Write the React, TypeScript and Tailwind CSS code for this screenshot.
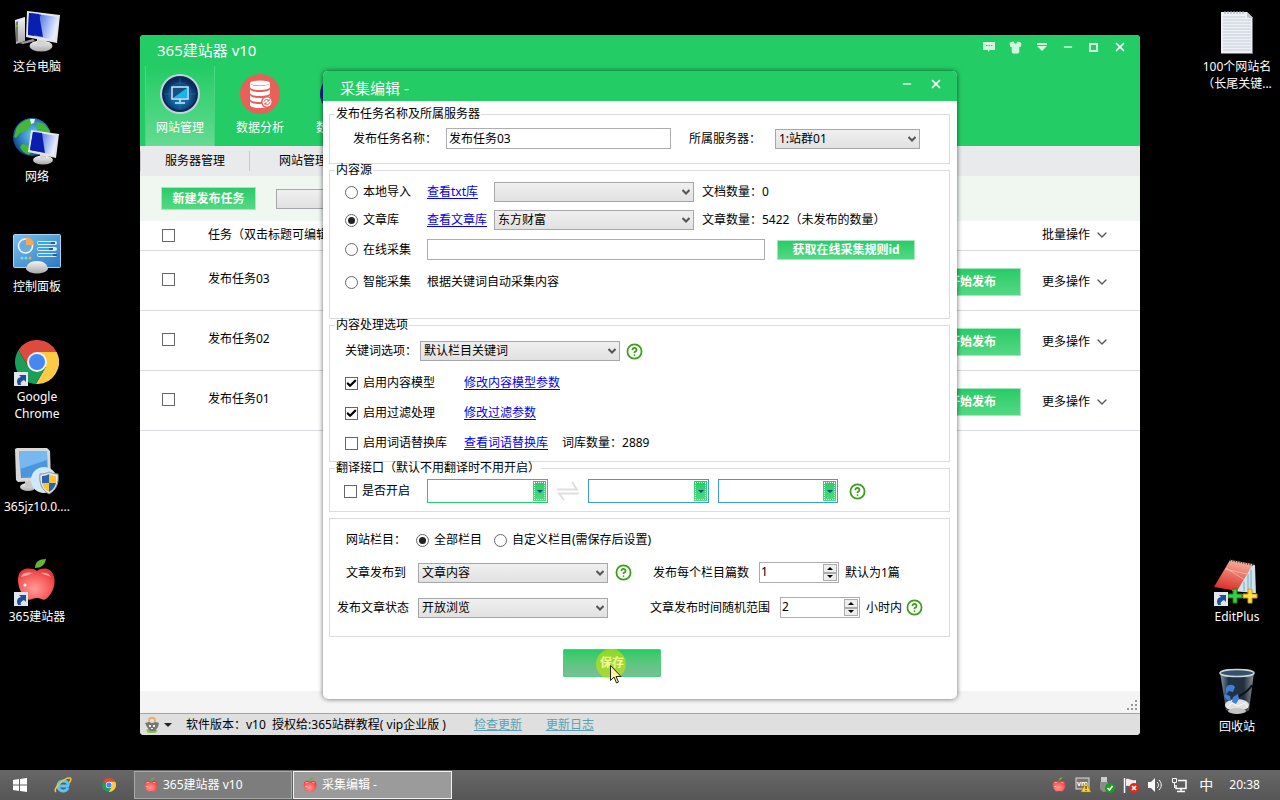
import type { ReactNode } from "react"
import { Check, ChevronDown, HelpCircle, Minus, Shirt, X } from "lucide-react"

const tasks = ["发布任务03", "发布任务02", "发布任务01"]

// ─── Desktop icons ──────────────────────────────────────────────────────────

function IconDefs() {
  return (
    <svg className="absolute h-0 w-0" aria-hidden="true">
      <defs>
        <linearGradient id="screen" x1="0" x2="1" y1="0" y2="0.3">
          <stop offset="0" stopColor="#0a1fc4" />
          <stop offset="0.4" stopColor="#0a2bd0" />
          <stop offset="0.42" stopColor="#5d7fe8" />
          <stop offset="1" stopColor="#e4edff" />
        </linearGradient>
        <linearGradient id="metal" x1="0" x2="0" y1="0" y2="1">
          <stop offset="0" stopColor="#f4f4f4" />
          <stop offset="1" stopColor="#a9a9a9" />
        </linearGradient>
        <radialGradient id="globe" cx="0.55" cy="0.45" r="0.6">
          <stop offset="0" stopColor="#6fd0f5" />
          <stop offset="0.6" stopColor="#2f7fc4" />
          <stop offset="1" stopColor="#123c86" />
        </radialGradient>
        <linearGradient id="panel" x1="0" x2="1" y1="0" y2="1">
          <stop offset="0" stopColor="#7cc0ea" />
          <stop offset="1" stopColor="#2b79c2" />
        </linearGradient>
        <radialGradient id="apple" cx="0.45" cy="0.65" r="0.65">
          <stop offset="0" stopColor="#ff9c98" />
          <stop offset="0.6" stopColor="#f8615f" />
          <stop offset="1" stopColor="#e8383a" />
        </radialGradient>
        <linearGradient id="pad" x1="0.6" x2="0.3" y1="0" y2="1">
          <stop offset="0" stopColor="#f7b09e" />
          <stop offset="1" stopColor="#d92a22" />
        </linearGradient>
        <linearGradient id="bin" x1="0" x2="1" y1="0" y2="0">
          <stop offset="0" stopColor="#8d99a5" />
          <stop offset="0.25" stopColor="#1f3347" />
          <stop offset="0.7" stopColor="#23303c" />
          <stop offset="1" stopColor="#8c949c" />
        </linearGradient>
        <radialGradient id="radar" cx="0.5" cy="0.6" r="0.6">
          <stop offset="0" stopColor="#1490d8" />
          <stop offset="1" stopColor="#0a2450" />
        </radialGradient>
      </defs>
    </svg>
  )
}

function Shortcut() {
  return (
    <g>
      <rect x="1" y="34" width="14" height="14" fill="#dfe6ee" />
      <path d="M5 47c-2-4-1-7 3-8l-2-2h7v7l-2-2c-3 1-4 3-3 5z" fill="#1f4f9a" />
    </g>
  )
}

function ComputerIcon() {
  return (
    <svg viewBox="0 0 48 48" className="size-12">
      <path d="M2 12l10-3v24L3 36z" fill="url(#metal)" />
      <path d="M3 14l2-1v20l-2 1z" fill="#777" />
      <circle cx="4" cy="18" r="1" fill="#5d0" />
      <path d="M6 35l14-4 2 2-12 3z" fill="#999" />
      <ellipse cx="28" cy="38" rx="11.500" ry="5.500" fill="url(#metal)" />
      <path d="M24 31h9v7h-9z" fill="#d5d5d5" />
      <path d="M14 3l33 4-3 28-31-6z" fill="#e6e6e6" />
      <path d="M16 5l29 4-3 23-27-5z" fill="url(#screen)" />
      <path d="M16 5l10 1 4 23-15-3z" fill="#0a1fb0" />
    </svg>
  )
}

function NetworkIcon() {
  return (
    <svg viewBox="0 0 48 48" className="size-12">
      <circle cx="19" cy="19" r="19" fill="url(#globe)" />
      <path d="M3 11c4-7 10-10 16-10l3 3-5 4-3 5-7 2-4 5-2-1zM24 4l7 2 6 7-2 3-6-2-6-4zM9 26l6 1 4 6-3 4c-5-2-8-5-9-8z" fill="#45b636" />
      <path d="M17 1l5 0-1 4-3 1z" fill="#e6f6ff" />
      <ellipse cx="30" cy="42" rx="10" ry="4.500" fill="url(#metal)" />
      <path d="M27 36h6v6h-6z" fill="#d5d5d5" />
      <path d="M18 12l28 4-3 24-28-6z" fill="#e4e4e4" />
      <path d="M20 14l24 4-3 19-24-5z" fill="url(#screen)" />
      <path d="M20 14l9 1 3 20-15-3z" fill="#0a1fb0" />
    </svg>
  )
}

function ControlPanelIcon() {
  return (
    <svg viewBox="0 0 48 48" className="size-12">
      <rect x="0.500" y="6.500" width="47" height="33" rx="1" fill="url(#panel)" stroke="#a9d5f3" />
      <circle cx="12.500" cy="18" r="7" fill="#69acdf" stroke="#f2f8fd" strokeWidth="1.500" />
      <path d="M13 17V9a8 8 0 0 1 8 8z" fill="#f6a85a" />
      <circle cx="9" cy="30" r="1.500" fill="#67e3f7" />
      <circle cx="13" cy="30" r="1.500" fill="#67e3f7" />
      <circle cx="17" cy="30" r="1.500" fill="#f8a93c" />
      {[13, 19, 25].map((y, i) => (
        <g key={y}>
          <rect x="24" y={y} width="20" height="4" rx="2" fill="#d9eefb" />
          <rect x="25" y={y + 1} width={[13, 11, 15][i]} height="2" fill="#37a4e8" />
          <rect x={[38, 36, 40][i]} y={y + 1} width="4" height="2" fill="#1b5fa8" />
        </g>
      ))}
      <path d="M13 41c1-5 4-8 11-8s10 3 11 8c-3 6-19 6-22 0z" fill="url(#metal)" />
    </svg>
  )
}

function ChromeMark({ className }: { className: string }) {
  return (
    <svg viewBox="-22 -22 44 44" className={className}>
      <path d="M0-10H19.600A22 22 0 0 0-18.460-11.970L-8.660 5Z" fill="#dd4b3e" />
      <path d="M0-10H19.600A22 22 0 0 1-1.140 21.970L8.660 5Z" fill="#fdcb43" />
      <path d="M-8.660 5L-18.460-11.970A22 22 0 0 0-1.140 21.970L8.660 5Z" fill="#1a9e5a" />
      <circle r="10" fill="#f3f3f3" />
      <circle r="8" fill="#4587f3" />
    </svg>
  )
}

function ChromeIcon() {
  return (
    <span className="relative flex size-12 items-center justify-center">
      <ChromeMark className="size-11" />
      <svg viewBox="0 0 48 48" className="absolute inset-0 size-12">
        <Shortcut />
      </svg>
    </span>
  )
}

function SetupIcon() {
  return (
    <svg viewBox="0 0 48 48" className="size-12">
      <ellipse cx="15" cy="39" rx="8" ry="4" fill="url(#metal)" />
      <path d="M12 31h8v8h-8z" fill="#c9c9c9" />
      <path d="M2 1l2-1h30l3 3 1 29-33 2-2-2z" fill="#d8d8d8" />
      <path d="M6 3h28l1 26-27 1z" fill="#4a97df" />
      <path d="M6 3h28v9L7 21z" fill="#77b8ee" />
      <circle cx="31" cy="32" r="13" fill="#cfe8fa" />
      <path d="M27 26c4 0 7-1 9-2 2 1 5 2 9 2 1 10-2 16-9 20-7-4-10-10-9-20z" fill="#e8e8e8" stroke="#909090" />
      <path d="M29 28c3 0 5-1 7-2v9h-7zM36 35h7c-1 4-3 7-7 9z" fill="#2b62b5" />
      <path d="M36 26c2 1 4 2 7 2v7h-7zM29 35h7v9c-4-2-6-5-7-9z" fill="#f5c92e" />
    </svg>
  )
}

function AppleShape() {
  return (
    <g>
      <path d="M24 13c5-4 13-3 16 3 4 8 0 20-7 25-3 2-5-1-9-1s-7 3-10 1C7 36 3 24 6 16c3-6 12-7 18-3z" fill="url(#apple)" />
      <path d="M8 19c2-5 7-5 12-4-4 2-8 3-12 4zM28 15c4-1 8 0 10 4-4-2-7-2-10-4z" fill="#ffd0cd" opacity="0.700" />
      <circle cx="12" cy="27" r="1.500" fill="#fff" />
      <path d="M22 10c0-6 4-9 11-9-1 6-5 9-11 9z" fill="#63b62f" />
    </g>
  )
}

function AppleIcon() {
  return (
    <svg viewBox="0 0 48 48" className="size-12">
      <AppleShape />
      <Shortcut />
    </svg>
  )
}

function SmallApple() {
  return (
    <svg viewBox="0 0 46 46" className="size-4 shrink-0">
      <AppleShape />
    </svg>
  )
}

function NotepadIcon() {
  return (
    <svg viewBox="0 0 48 48" className="size-12">
      <path d="M8 4h26l6 6v36H8z" fill="#eef1f6" />
      <path d="M34 4v6h6z" fill="#c4cad3" />
      {[9, 12, 15, 18, 21, 24, 27, 30, 33, 36, 39, 42].map((y) => (
        <path key={y} d={`M10 ${y}h${y < 12 ? 22 : 28}`} stroke="#c3ccd8" />
      ))}
      <path d="M12 3v3M15 3v3M18 3v3M21 3v3M24 3v3M27 3v3M30 3v3" stroke="#9aa3ad" />
      <path d="M8 45.500h32M39.500 10v36" stroke="#70767e" />
    </svg>
  )
}

function EditPlusIcon() {
  return (
    <svg viewBox="0 0 48 48" className="size-12">
      <path d="M17 2l25 5 1 28-24-2z" fill="#d9c9a8" />
      <path d="M39 8l3 0v27l-18-2z" fill="#cfe3ee" />
      <path d="M38 12v18M35 16v16M31 24v9" stroke="#7aa5bd" />
      <path d="M17 2l23 4-16 27-23-4z" fill="url(#pad)" />
      <path d="M13 10l19 12M12 11l22 5" stroke="#fbd3c8" opacity="0.600" />
      <path d="M17 2l24 5" stroke="#333" strokeWidth="2" strokeDasharray="1 1.500" />
      <path d="M20 31h4v5h5v4h-5v5h-4v-5h-5v-4h5z" fill="#3ecb45" stroke="#14831c" />
      <path d="M35 31h4v5h5v4h-5v5h-4v-5h-5v-4h5z" fill="#ffe04a" stroke="#d29a08" />
      <Shortcut />
    </svg>
  )
}

function RecycleBinIcon() {
  return (
    <svg viewBox="0 0 48 48" className="size-12">
      <path d="M7 4h34l-5 38c-3 4-20 4-23 0z" fill="url(#bin)" />
      <ellipse cx="24" cy="5" rx="17" ry="3.500" fill="#35516b" stroke="#cfd6dc" strokeWidth="1.500" />
      <path d="M39 17c-4 7-8 8-14 12" fill="none" stroke="#0c1218" strokeWidth="2" />
      <ellipse cx="24" cy="37" rx="12" ry="6" fill="#e0e0e0" />
      <ellipse cx="24" cy="43" rx="9" ry="3" fill="#c3c3c3" />
      <path d="M13 20c2-4 7-4 9-1l-2 5-4-1-3 3zM12 26l5 2 1 5-4-1c-2-2-3-4-2-6zM20 29l5-3 1 5-3 5-4-2z" fill="#3f7fd6" />
      <path d="M14 40l5-5 6 3 7-3 3 5" fill="none" stroke="#f7f7f7" />
    </svg>
  )
}

function DesktopItem({ icon, label }: { icon: ReactNode; label: string }) {
  return (
    <button type="button" className="flex h-[110px] w-[74px] flex-col items-center gap-0.5 pt-2 text-xs leading-[17px] text-white">
      {icon}
      <span className="whitespace-pre-line">{label}</span>
    </button>
  )
}

// ─── Form parts ─────────────────────────────────────────────────────────────

function Tick({ id, label, type, name, checked = false, hideLabel = false }: {
  id: string
  label: string
  type: "checkbox" | "radio"
  name?: string
  checked?: boolean
  hideLabel?: boolean
}) {
  const round = type === "radio"
  return (
    <label htmlFor={id} className="flex items-center gap-[5px] whitespace-nowrap">
      <span className="relative flex size-[13px] shrink-0 items-center justify-center">
        <input
          id={id}
          type={type}
          name={name}
          defaultChecked={checked}
          aria-label={hideLabel ? label : undefined}
          className={
            round
              ? "peer size-[13px] appearance-none rounded-full border border-[#666] bg-white"
              : "peer size-[13px] appearance-none border border-[#666] bg-white"
          }
        />
        {round ? (
          <span className="pointer-events-none absolute hidden size-[7px] rounded-full bg-[#222] peer-checked:block" />
        ) : (
          <Check className="pointer-events-none absolute hidden size-[11px] text-black peer-checked:block" strokeWidth={5} />
        )}
      </span>
      {!hideLabel && label}
    </label>
  )
}

function Select({ id, value = "", width, label }: { id: string; value?: string; width: string; label?: string }) {
  return (
    <span className={`relative flex shrink-0 items-center ${width}`}>
      <select
        id={id}
        aria-label={label}
        className="h-5 w-full appearance-none border border-[#a7a7ab] bg-linear-to-b from-[#f0f0f0] to-[#e1e1e1] pr-5 pl-[3px] leading-[18px] text-black"
      >
        <option>{value}</option>
      </select>
      <svg viewBox="0 0 8 6" className="pointer-events-none absolute right-1 h-1.5 w-2">
        <path d="M0.500 1L4 4.500 7.500 1" fill="none" stroke="#555" strokeWidth="2" />
      </svg>
    </span>
  )
}

function LangSelect({ label, width, border }: { label: string; width: string; border: string }) {
  return (
    <span className={`relative flex shrink-0 items-center ${width}`}>
      <select aria-label={label} className={`h-6 w-full appearance-none border bg-white ${border}`}>
        <option />
      </select>
      <span className="pointer-events-none absolute right-[2px] flex h-5 w-[13px] bg-linear-to-b from-[#22cc64] to-[#4fdb80] p-px">
        <span className="flex flex-1 items-center justify-center border border-dotted border-white">
          <svg viewBox="0 0 6 3" className="h-[3px] w-1.5">
            <path d="M0 0h6L3 3z" fill="#0b4a8c" />
          </svg>
        </span>
      </span>
    </span>
  )
}

function Spinner({ id, value }: { id: string; value: string }) {
  return (
    <span className="flex h-[21px] w-20 shrink-0 border border-[#abadb3] bg-white p-px">
      <input id={id} inputMode="numeric" defaultValue={value} className="w-full min-w-0 self-start leading-4 outline-none" />
      <span className="flex w-3.5 shrink-0 flex-col">
        {["增加", "减少"].map((name, i) => (
          <button key={name} type="button" aria-label={name} className="flex flex-1 items-center justify-center border border-[#acacac] bg-[#eee]">
            <svg viewBox="0 0 6 3" className={i === 0 ? "h-[3px] w-1.5" : "h-[3px] w-1.5 rotate-180"}>
              <path d="M0 3h6L3 0z" fill="#000" />
            </svg>
          </button>
        ))}
      </span>
    </span>
  )
}

function Help() {
  return (
    <button type="button" aria-label="帮助" className="shrink-0 text-[#3a9f16]">
      <HelpCircle className="size-[17px]" strokeWidth={2.5} />
    </button>
  )
}

function TextLink({ children }: { children: ReactNode }) {
  return (
    <a href="#" className="whitespace-nowrap text-[#0000ee] underline underline-offset-2">
      {children}
    </a>
  )
}

function Group({ title, className, children }: { title: string; className: string; children: ReactNode }) {
  return (
    <fieldset className="min-w-0 border border-[#dcdcdc]">
      <legend className="ml-[5px] h-3 px-px leading-3">{title}</legend>
      <div className={className}>{children}</div>
    </fieldset>
  )
}

// ─── Main window ────────────────────────────────────────────────────────────

function DatabaseIcon() {
  return (
    <svg viewBox="0 0 40 40" className="size-10">
      <circle cx="20" cy="20" r="20" fill="#e9605a" />
      {[12, 18, 24, 30].map((y) => (
        <path key={y} d={`M10 ${y - 3}c0 4 20 4 20 0v4c0 4-20 4-20 0z`} fill="#fff" />
      ))}
      <ellipse cx="20" cy="9" rx="10" ry="2.500" fill="#fff" />
      <circle cx="27" cy="28" r="6" fill="#e9605a" />
      <circle cx="27" cy="28" r="4.500" fill="#fff" />
      <path d="M24 28c0-3 5-3 5-1M30 28c0 3-5 3-5 1M29 25v2h-2M25 31v-2h2" fill="none" stroke="#e9605a" />
    </svg>
  )
}

function SiteIcon() {
  return (
    <svg viewBox="0 0 40 40" className="size-10">
      <circle cx="20" cy="20" r="20" fill="#c3d3df" />
      <circle cx="20" cy="20" r="18" fill="#0d2a55" />
      <circle cx="20" cy="20" r="16" fill="url(#radar)" />
      <path d="M4 20h32M20 4v32" stroke="#2b6fa8" opacity="0.600" />
      <circle cx="20" cy="20" r="11" fill="none" stroke="#2b6fa8" opacity="0.600" />
      <rect x="12" y="13" width="16" height="12" fill="#15507f" stroke="#cbeaff" strokeWidth="1.500" />
      <path d="M13 24l14-10v10z" fill="#18b5e8" />
      <path d="M20 25v3M15 29h10" stroke="#cbeaff" strokeWidth="1.500" />
    </svg>
  )
}

function CollectIcon() {
  return (
    <svg viewBox="0 0 40 40" className="size-10">
      <circle cx="20" cy="20" r="20" fill="#14208f" />
      <path d="M12 20h16M22 14l6 6-6 6" fill="none" stroke="#fff" strokeWidth="2" />
    </svg>
  )
}

function MainWindow() {
  return (
    <section className="absolute inset-[35px_140px] flex flex-col overflow-hidden rounded-[4px] bg-white text-xs text-black">
      <header className="bg-[#23cc64] text-white">
        <div className="flex h-[31px] justify-between pr-[13px] pl-[17px]">
          <h1 className="text-[15px] leading-[31px]">365建站器 v10</h1>
          <div className="flex h-6 items-center gap-3.5 text-[#d3f5e0]">
            <button type="button" aria-label="消息">
              <svg viewBox="0 0 12 12" className="size-3">
                <path d="M0 1h12v8H7l-2 2V9H0z" fill="currentColor" />
                <path d="M3 4.500h1.500M5.500 4.500H7M8 4.500h1.500" stroke="#23cc64" />
              </svg>
            </button>
            <button type="button" aria-label="皮肤">
              <Shirt className="size-[13px] fill-current" />
            </button>
            <button type="button" aria-label="菜单">
              <svg viewBox="0 0 12 12" className="size-3">
                <path d="M1 2h10v2H1zM1 5h10L6 10z" fill="currentColor" />
              </svg>
            </button>
            <button type="button" aria-label="最小化">
              <Minus className="size-3" strokeWidth={3} />
            </button>
            <button type="button" aria-label="最大化">
              <svg viewBox="0 0 11 11" className="size-[11px]">
                <path d="M2 2h7v7H2z" fill="none" stroke="currentColor" strokeWidth="2" />
              </svg>
            </button>
            <button type="button" aria-label="关闭" className="text-white">
              <X className="size-[14px]" strokeWidth={3} />
            </button>
          </div>
        </div>
        <nav className="flex gap-2.5 pl-[5px] text-center">
          <button type="button" className="flex h-20 w-[70px] flex-col items-center gap-1.5 border-x border-[#4bd582] bg-linear-to-b from-transparent to-white/30 pt-2">
            <SiteIcon />
            网站管理
          </button>
          <button type="button" className="flex h-20 w-[70px] flex-col items-center gap-1.5 pt-2">
            <DatabaseIcon />
            数据分析
          </button>
          <button type="button" className="flex h-20 w-[70px] flex-col items-center gap-1.5 pt-2">
            <CollectIcon />
            数据采集
          </button>
        </nav>
      </header>

      <nav className="flex h-[30px] shrink-0 items-center bg-[#e9eaec]">
        <button type="button" className="h-5 w-[110px] border-r border-l border-r-[#c9cacd] border-l-[#c9cacd]">服务器管理</button>
        <button type="button" className="h-5 w-[106px]">网站管理</button>
      </nav>

      <div className="flex h-[45px] shrink-0 items-center gap-5 bg-[#f0f7f1] pl-[21px]">
        <button type="button" className="h-[23px] w-[95px] border border-[#a5e8bf] bg-linear-to-b from-[#28cb68] to-[#52d983] font-bold text-white">
          新建发布任务
        </button>
        <Select id="task-filter" label="任务筛选" width="w-[200px]" />
      </div>

      <table className="w-full table-fixed border-collapse text-left">
        <thead>
          <tr className="h-[29px] border-b border-[#d8dbde]">
            <th className="w-[68px] pl-[22px] font-normal">
              <Tick id="task-all" type="checkbox" label="全选" hideLabel />
            </th>
            <th className="font-normal">任务（双击标题可编辑）</th>
            <th className="w-[119px]" />
            <th className="w-[98px] font-normal">
              <button type="button" className="flex items-center gap-1">
                批量操作
                <ChevronDown className="size-4 text-[#555]" strokeWidth={2} />
              </button>
            </th>
          </tr>
        </thead>
        <tbody>
          {tasks.map((task) => (
            <tr key={task} className="h-[60px] border-b border-[#d8dbde]">
              <td className="pb-0.5 pl-[22px]">
                <Tick id={task} type="checkbox" label={task} hideLabel />
              </td>
              <td className="pb-0.5">{task}</td>
              <td className="pt-1">
                <button type="button" className="h-7 w-[98px] border border-[#a5e8bf] bg-linear-to-b from-[#28cb68] to-[#52d983] font-bold text-white">
                  开始发布
                </button>
              </td>
              <td className="pt-1">
                <button type="button" className="flex items-center gap-1">
                  更多操作
                  <ChevronDown className="size-4 text-[#555]" strokeWidth={2} />
                </button>
              </td>
            </tr>
          ))}
        </tbody>
      </table>

      <div className="mt-auto flex h-[22px] items-end justify-end bg-[#f4f4f4] p-[3px]">
        <svg viewBox="0 0 10 10" className="size-2.5">
          <path d="M8 0h2v2H8zM4 4h2v2H4zM8 4h2v2H8zM0 8h2v2H0zM4 8h2v2H4zM8 8h2v2H8z" fill="#999" />
        </svg>
      </div>
      <footer className="flex h-[22px] shrink-0 items-center border-t border-[#7faec6] bg-[#dfdfdf] pl-1">
        <button type="button" aria-label="账户" className="flex w-[42px] items-center gap-1">
          <svg viewBox="0 0 16 16" className="size-4">
            <path d="M2 13c3-2 9-1 12 1l-3 2H4z" fill="#8fc04a" />
            <path d="M5 6V3c0-3 6-3 6 0v3" fill="none" stroke="#f0a63c" strokeWidth="1.500" />
            <path d="M1 6l4-1 3 1 4-1 3 1-1 4-3 4H6L3 10z" fill="#777" />
            <path d="M5 8h2v2H5zM9 8h2v2H9zM7 11h2v1H7z" fill="#eee" />
          </svg>
          <svg viewBox="0 0 8 4" className="h-1 w-2">
            <path d="M0 0h8L4 4z" fill="#222" />
          </svg>
        </button>
        <span className="whitespace-pre">软件版本：v10  授权给:365站群教程( vip企业版 )</span>
        <a href="#" className="ml-7 text-[#5a9fb3] underline">检查更新</a>
        <a href="#" className="ml-6 text-[#5a9fb3] underline">更新日志</a>
      </footer>
    </section>
  )
}

// ─── Edit dialog ────────────────────────────────────────────────────────────

function EditDialog() {
  return (
    <section
      role="dialog"
      aria-labelledby="edit-title"
      className="absolute top-[71px] left-1/2 w-[634px] -translate-x-1/2 overflow-hidden rounded-[5px] bg-white pb-[22px] text-xs leading-4 text-black shadow-[0_0_5px_rgba(0,0,0,0.6)]"
    >
      <header className="flex h-[30px] justify-between bg-[#23cc64] pr-3.5 pl-[17px] text-white">
        <h2 id="edit-title" className="text-[15px] leading-[34px]">采集编辑 -</h2>
        <div className="flex h-[26px] items-center gap-4">
          <button type="button" aria-label="最小化" className="text-[#d3f5e0]">
            <Minus className="size-3" strokeWidth={3} />
          </button>
          <button type="button" aria-label="关闭">
            <X className="size-[14px]" strokeWidth={3} />
          </button>
        </div>
      </header>

      <form className="pt-[7px] pr-[7px] pl-1.5">
        <Group title="发布任务名称及所属服务器" className="pt-2 pb-3.5 pl-[23px]">
          <div className="flex h-[21px] items-center">
            <label htmlFor="task-name" className="w-[93px]">发布任务名称：</label>
            <input id="task-name" defaultValue="发布任务03" className="h-[21px] w-[225px] border border-[#abadb3] px-0.5 pb-0.5" />
            <label htmlFor="server" className="ml-[18px] w-[86px]">所属服务器：</label>
            <Select id="server" value="1:站群01" width="w-[145px]" />
          </div>
        </Group>

        <Group title="内容源" className="pt-1.5 pb-[26px] pl-[15px]">
          <div className="flex h-5 items-center">
            <div className="w-[82px]"><Tick id="src-local" type="radio" name="source" label="本地导入" /></div>
            <div className="w-[67px]"><TextLink>查看txt库</TextLink></div>
            <Select id="txt-store" label="txt库" width="w-[200px]" />
            <span className="ml-2">文档数量：0</span>
          </div>
          <div className="mt-2 flex h-5 items-center">
            <div className="w-[82px]"><Tick id="src-store" type="radio" name="source" label="文章库" checked /></div>
            <div className="w-[67px]"><TextLink>查看文章库</TextLink></div>
            <Select id="article-store" label="文章库" value="东方财富" width="w-[200px]" />
            <span className="ml-2">文章数量：5422（未发布的数量）</span>
          </div>
          <div className="mt-[9px] flex h-[21px] items-center">
            <div className="w-[82px]"><Tick id="src-online" type="radio" name="source" label="在线采集" /></div>
            <input aria-label="在线采集规则" className="h-[21px] w-[338px] border border-[#abadb3] px-0.5" />
            <button type="button" className="ml-3 h-5 w-[138px] border border-[#a5e8bf] bg-linear-to-b from-[#28cb68] to-[#52d983] leading-4 font-bold text-white">
              获取在线采集规则id
            </button>
          </div>
          <div className="mt-3 flex h-5 items-center">
            <div className="w-[82px]"><Tick id="src-smart" type="radio" name="source" label="智能采集" /></div>
            <span>根据关键词自动采集内容</span>
          </div>
        </Group>

        <Group title="内容处理选项" className="pt-2.5 pb-2 pl-[15px]">
          <div className="flex h-5 items-center">
            <label htmlFor="keyword" className="w-[75px]">关键词选项：</label>
            <Select id="keyword" value="默认栏目关键词" width="w-[200px]" />
            <span className="ml-1.5 flex"><Help /></span>
          </div>
          <div className="mt-3 flex h-5 items-center">
            <div className="w-[119px]"><Tick id="use-model" type="checkbox" label="启用内容模型" checked /></div>
            <TextLink>修改内容模型参数</TextLink>
          </div>
          <div className="mt-2.5 flex h-5 items-center">
            <div className="w-[119px]"><Tick id="use-filter" type="checkbox" label="启用过滤处理" checked /></div>
            <TextLink>修改过滤参数</TextLink>
          </div>
          <div className="mt-2.5 flex h-5 items-center">
            <div className="w-[119px]"><Tick id="use-replace" type="checkbox" label="启用词语替换库" /></div>
            <TextLink>查看词语替换库</TextLink>
            <span className="ml-3.5">词库数量：2889</span>
          </div>
        </Group>

        <Group title="翻译接口（默认不用翻译时不用开启）" className="pt-[5px] pb-2 pl-3.5">
          <div className="flex h-6 items-center">
            <div className="w-[83px]"><Tick id="use-translate" type="checkbox" label="是否开启" /></div>
            <LangSelect label="源语言" width="w-[121px]" border="border-[#23cc64]" />
            <svg viewBox="0 0 22 20" className="mx-[9px] h-5 w-[22px] shrink-0">
              <path d="M0 8.500h20L15 1M22 12.500H2L7 19" fill="none" stroke="#dedede" strokeWidth="2" />
            </svg>
            <LangSelect label="目标语言" width="w-[121px]" border="border-[#3b9be0]" />
            <span className="w-[9px]" />
            <LangSelect label="翻译接口" width="w-[120px]" border="border-[#3b9be0]" />
            <span className="ml-[11px] flex"><Help /></span>
          </div>
        </Group>

        <fieldset className="mt-1.5 min-w-0 border border-[#dcdcdc] pt-[11px] pb-[18px]">
          <div className="flex h-5 items-center pl-4">
            <span className="w-[70px]">网站栏目：</span>
            <Tick id="col-all" type="radio" name="column" label="全部栏目" checked />
            <span className="ml-3 flex"><Tick id="col-custom" type="radio" name="column" label="自定义栏目(需保存后设置)" /></span>
          </div>
          <div className="mt-3 flex h-[21px] items-center pl-4">
            <label htmlFor="publish-to" className="w-[72px]">文章发布到</label>
            <Select id="publish-to" value="文章内容" width="w-[190px]" />
            <span className="ml-[7px] flex"><Help /></span>
            <label htmlFor="per-column" className="ml-[21px] w-[106px]">发布每个栏目篇数</label>
            <Spinner id="per-column" value="1" />
            <span className="ml-1.5">默认为1篇</span>
          </div>
          <div className="mt-3.5 flex h-[21px] items-center pl-[7px]">
            <label htmlFor="status" className="w-[81px]">发布文章状态</label>
            <Select id="status" value="开放浏览" width="w-[190px]" />
            <label htmlFor="time-range" className="ml-[42px] w-[130px]">文章发布时间随机范围</label>
            <Spinner id="time-range" value="2" />
            <span className="ml-1.5">小时内</span>
            <span className="ml-1 flex"><Help /></span>
          </div>
        </fieldset>

        <div className="mt-3 flex pl-[234px]">
          <button type="submit" className="relative h-7 w-[98px] rounded-[1px] border border-[#4bcf7e] bg-linear-to-b from-[#23cc64] to-[#7abf95] font-bold text-[#f3fb8c]">
            <span className="absolute -top-px left-8 size-[30px] rounded-full bg-[#c8e600]/60" />
            <span className="relative">保存</span>
            <svg viewBox="0 0 12 19" className="absolute top-[15px] left-[46px] z-10 h-[19px] w-3">
              <path d="M0.500 0.500v15l3.500-3.500 2.500 6 2-1-2.500-5.500h5z" fill="#fbf49a" stroke="#222" />
            </svg>
          </button>
        </div>
      </form>
    </section>
  )
}

// ─── Taskbar ────────────────────────────────────────────────────────────────

function Taskbar() {
  return (
    <footer className="flex h-[30px] shrink-0 items-center bg-linear-to-b from-[#676767] to-[#565656] text-xs text-white">
      <button type="button" aria-label="开始" className="flex w-[39px] justify-center">
        <svg viewBox="0 0 14 14" className="size-3.5">
          <path d="M0 2l6-1v5.500H0zM7 1l7-1v6.500H7zM0 7.500h6V13l-6-1zM7 7.500h7V14l-7-1z" fill="#fff" />
        </svg>
      </button>
      <button type="button" aria-label="Internet Explorer" className="flex w-12 justify-center">
        <svg viewBox="0 0 18 18" className="size-[18px]">
          <path d="M4 10h11M14 12c-3 5-10 3-10-2.500S14 3 14.500 9.500" fill="none" stroke="#5cc3f5" strokeWidth="3" />
          <path d="M2 16c-4-3 9-15 14-14 2 1 0 4-1 5" fill="none" stroke="#f5c534" strokeWidth="1.500" />
        </svg>
      </button>
      <button type="button" aria-label="Google Chrome" className="flex w-[47px] justify-center pr-1">
        <ChromeMark className="size-3.5" />
      </button>
      <button type="button" className="flex h-7 w-[158px] items-center gap-1 border border-[#a8a8a8] bg-[#7d7d7d] pl-2">
        <SmallApple />
        365建站器 v10
      </button>
      <button type="button" className="ml-px flex h-7 w-[159px] items-center gap-1 border border-[#f2f2f2] bg-[#9b9b9b] pl-2">
        <SmallApple />
        采集编辑 -
      </button>

      <div className="ml-auto flex items-center gap-2 pr-5">
        <SmallApple />
        <svg viewBox="0 0 16 16" className="size-4">
          <rect x="1" y="1" width="13" height="11" fill="#777" stroke="#ddd" />
          <text x="2" y="9" fontSize="7" fontWeight="700" fill="#fff">vm</text>
          <path d="M11 6l5 9H6z" fill="#ffd21f" stroke="#a97b00" strokeWidth="0.500" />
          <path d="M11 9v3M11 13v1" stroke="#222" />
        </svg>
        <svg viewBox="0 0 16 16" className="size-4">
          <path d="M2 0h6v5H2z" fill="#ccc" />
          <path d="M1 5h8v7l-3 3H4l-3-3z" fill="#8a8a8a" />
          <circle cx="11" cy="11" r="5" fill="#18a01d" />
          <path d="M8.500 11l2 2 3-4" fill="none" stroke="#fff" strokeWidth="1.500" />
        </svg>
        <svg viewBox="0 0 16 16" className="size-4">
          <path d="M1.500 1v15" stroke="#fff" strokeWidth="1.500" />
          <path d="M3 2c3-1 5 2 10 1v7c-5 1-7-2-10-1z" fill="#eee" />
          <circle cx="11" cy="11" r="5" fill="#df2a22" />
          <path d="M9 9l4 4M13 9l-4 4" stroke="#fff" strokeWidth="1.500" />
        </svg>
        <svg viewBox="0 0 16 16" className="size-4">
          <path d="M1 5h3l4-4v14l-4-4H1z" fill="#fff" />
          <path d="M10 5c2 2 2 4 0 6M12 3c3 3 3 7 0 10" fill="none" stroke="#fff" />
        </svg>
        <svg viewBox="0 0 16 16" className="size-4">
          <path d="M7 3.500h8v8H5V8M10 12v2M6 14.500h8" fill="none" stroke="#fff" strokeWidth="1.500" />
          <path d="M1.500 1.500h4v4h-4zM3.500 5.500V11" fill="none" stroke="#fff" />
        </svg>
        <span className="mx-1 text-sm leading-4">中</span>
        <time className="ml-1">20:38</time>
      </div>
    </footer>
  )
}

export default function App() {
  return (
    <div className="flex min-h-screen flex-col bg-black font-['Noto_Sans','Noto_Sans_CJK_SC',sans-serif]">
      <IconDefs />
      <main className="relative flex min-h-[770px] flex-1 justify-between pr-1.5">
        <div className="flex flex-col">
          <DesktopItem icon={<ComputerIcon />} label="这台电脑" />
          <DesktopItem icon={<NetworkIcon />} label="网络" />
          <DesktopItem icon={<ControlPanelIcon />} label="控制面板" />
          <DesktopItem icon={<ChromeIcon />} label={"Google\nChrome"} />
          <DesktopItem icon={<SetupIcon />} label="365jz10.0...." />
          <DesktopItem icon={<AppleIcon />} label="365建站器" />
        </div>
        <div className="flex flex-col justify-between">
          <DesktopItem icon={<NotepadIcon />} label={"100个网站名\n（长尾关键..."} />
          <div>
            <DesktopItem icon={<EditPlusIcon />} label="EditPlus" />
            <DesktopItem icon={<RecycleBinIcon />} label="回收站" />
          </div>
        </div>
        <MainWindow />
        <EditDialog />
      </main>
      <Taskbar />
    </div>
  )
}
